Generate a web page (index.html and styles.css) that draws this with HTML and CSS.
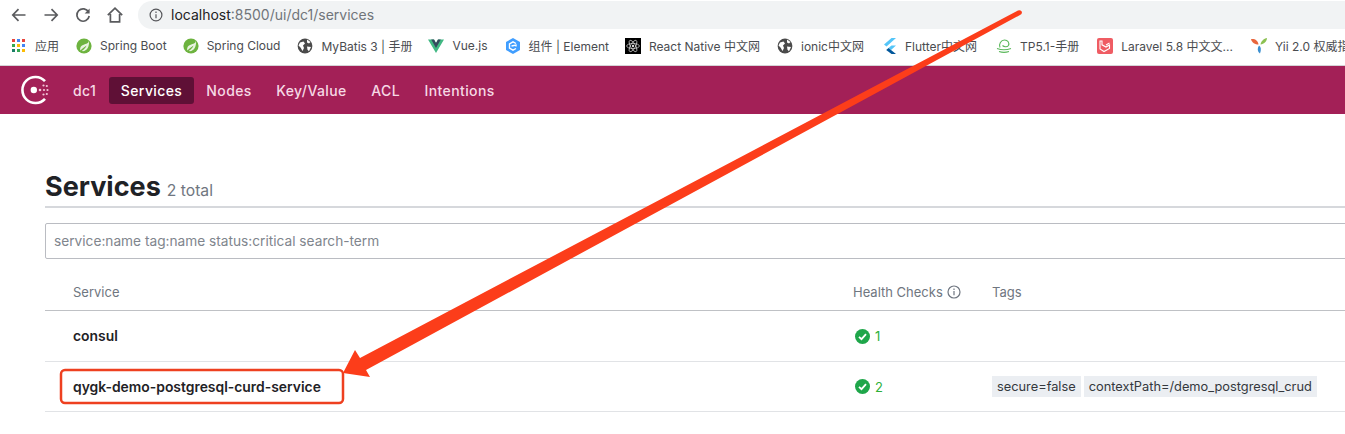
FILE: index.html
```html
<!DOCTYPE html>
<html lang="en">
<head>
  <meta charset="UTF-8">
  <title>Consul - Services</title>
  <link rel="stylesheet" href="styles.css">
</head>
<body>
<!-- browser chrome -->
<div class="toolbar">
  <svg class="tool" width="18" height="18" viewBox="0 0 18 18"><path d="M15.500 9H3M8.500 3.200 2.800 9l5.700 5.800"/></svg>
  <svg class="tool" width="18" height="18" viewBox="0 0 18 18"><path d="M2.500 9H15M9.500 3.200 15.200 9l-5.700 5.800"/></svg>
  <svg class="tool" width="18" height="18" viewBox="0 0 18 18"><path d="M14.600 6.200A6.200 6.200 0 1 0 15.200 10"/><path class="solid" d="M15.600 2.600v5h-5z"/></svg>
  <svg class="tool" width="18" height="18" viewBox="0 0 18 18"><path d="M1.800 9.200 9 2.200l7.200 7M4.400 8v7.800h9.200V8"/></svg>
  <div class="address">
    <svg class="info" width="14" height="14" viewBox="0 0 14 14"><circle cx="7" cy="7" r="5.900"/><path d="M7 6.200v4M7 3.600v1.400"/></svg>
    <span class="host">localhost</span><span class="path">:8500/ui/dc1/services</span>
  </div>
</div>

<div class="bookmarks">
  <div class="mark apps">
    <svg width="13" height="13" viewBox="0 0 13 13">
      <rect width="3" height="3" fill="#e8453c"/><rect x="5" width="3" height="3" fill="#4285f4"/><rect x="10" width="3" height="3" fill="#e8453c"/>
      <rect y="5" width="3" height="3" fill="#34a853"/><rect x="5" y="5" width="3" height="3" fill="#fbbc05"/><rect x="10" y="5" width="3" height="3" fill="#4285f4"/>
      <rect y="10" width="3" height="3" fill="#1a7f64"/><rect x="5" y="10" width="3" height="3" fill="#34a853"/><rect x="10" y="10" width="3" height="3" fill="#fbbc05"/>
    </svg>
    <span>应用</span>
  </div>
  <div class="mark">
    <svg width="16" height="16" viewBox="0 0 16 16"><circle cx="8" cy="8" r="7.600" fill="#6db33f"/><path d="M13 2.500C12.500 6.500 9 5.500 6 7.500c-1.800 1.200-2.300 3.500-1.600 5C7 9.500 9 9 10.500 7.500c-.5 2-2.300 3.800-4.800 5.500 4.300 1 8-3.500 7.300-10.500z" fill="#e8f3df"/></svg>
    <span>Spring Boot</span>
  </div>
  <div class="mark">
    <svg width="16" height="16" viewBox="0 0 16 16"><circle cx="8" cy="8" r="7.600" fill="#6db33f"/><path d="M13 2.500C12.500 6.500 9 5.500 6 7.500c-1.800 1.200-2.300 3.500-1.600 5C7 9.500 9 9 10.500 7.500c-.5 2-2.300 3.800-4.800 5.500 4.300 1 8-3.500 7.300-10.500z" fill="#e8f3df"/></svg>
    <span>Spring Cloud</span>
  </div>
  <div class="mark">
    <svg width="16" height="16" viewBox="0 0 16 16"><circle cx="8" cy="8" r="7.400" fill="#4a4a4a"/><path d="M3 4.500 6.500 3.500 8 5.500 6 7.500 7 10l-1.500 3L3.500 9.500 1.500 7.500zM10 1.500l3.500 2.500-1.500 1.500-2-1zM10 8.500l4 .5-2 4.200-1.500-1.500z" fill="#fff"/></svg>
    <span>MyBatis 3 | 手册</span>
  </div>
  <div class="mark">
    <svg width="16" height="16" viewBox="0 0 16 16"><path d="M0 1.500h6L8 5l2-3.500h6L8 15z" fill="#41b883"/><path d="M3.200 1.500H6L8 5l2-3.500h2.800L8 10z" fill="#35495e"/></svg>
    <span>Vue.js</span>
  </div>
  <div class="mark">
    <svg width="16" height="16" viewBox="0 0 16 16"><path d="M8 0 15 4v8l-7 4-7-4V4z" fill="#409eff"/><path d="M11 5.500 8 3.800 4.500 5.800v4.400L8 12.200l3-1.700M6.500 8 11 7v1.500" fill="none" stroke="#fff" stroke-width="1.400"/></svg>
    <span>组件 | Element</span>
  </div>
  <div class="mark">
    <svg width="16" height="16" viewBox="0 0 16 16"><rect width="16" height="16" fill="#000"/><g fill="none" stroke="#ddd" stroke-width=".7"><ellipse cx="8" cy="8" rx="6.400" ry="2.500"/><ellipse cx="8" cy="8" rx="6.400" ry="2.500" transform="rotate(60 8 8)"/><ellipse cx="8" cy="8" rx="6.400" ry="2.500" transform="rotate(120 8 8)"/></g><circle cx="8" cy="8" r="1.200" fill="#ddd"/></svg>
    <span>React Native 中文网</span>
  </div>
  <div class="mark">
    <svg width="16" height="16" viewBox="0 0 16 16"><circle cx="8" cy="8" r="7.400" fill="#4a4a4a"/><path d="M3 4.500 6.500 3.500 8 5.500 6 7.500 7 10l-1.500 3L3.500 9.500 1.500 7.500zM10 1.500l3.500 2.500-1.500 1.500-2-1zM10 8.500l4 .5-2 4.200-1.500-1.500z" fill="#fff"/></svg>
    <span>ionic中文网</span>
  </div>
  <div class="mark">
    <svg width="14" height="16" viewBox="0 0 14 16"><path d="M8.500 0h4.500L3.500 8.500 1 6.500z" fill="#54c5f8"/><path d="M8.500 7.500H13L8 12l-2.500-2z" fill="#54c5f8"/><path d="M5.500 10 8 12l5 4H8.500L3.200 12z" fill="#01579b"/></svg>
    <span>Flutter中文网</span>
  </div>
  <div class="mark">
    <svg width="16" height="16" viewBox="0 0 16 16"><g fill="none" stroke="#5cb85c" stroke-width="1.100"><path d="M4 9.500C2.500 6 5 2 8.500 2 12 2 13.500 5 12.500 7.500 11 9.500 8 9 6.500 7.500"/><path d="M1 10.500c4 1.500 10 1.500 14 0M3 13.500c3 1 7 1 10 0"/></g></svg>
    <span>TP5.1-手册</span>
  </div>
  <div class="mark">
    <svg width="16" height="16" viewBox="0 0 16 16"><rect width="16" height="16" rx="2" fill="#ef5c63"/><path d="M3 3v8l4 2.500 5.500-3V7L9 9 5 6.800V3zM9 7l3.500-2" fill="none" stroke="#fff" stroke-width="1.100"/></svg>
    <span>Laravel 5.8 中文文...</span>
  </div>
  <div class="mark">
    <svg width="16" height="16" viewBox="0 0 16 16"><path d="M0 1c4-.5 7 1.500 7.500 5.500C4 6.500 1 5 0 1z" fill="#e8663d"/><path d="M16 0c-3 .5-6 3-6.500 6.500C13 6 15.500 4 16 0z" fill="#8cc152"/><path d="M8 7.500c2 1.500 2.500 4 1 8-2.500-1.500-3-5-1-8z" fill="#3a8fd0"/></svg>
    <span>Yii 2.0 权威指南</span>
  </div>
</div>

<!-- consul ui -->
<nav class="nav">
  <svg class="logo" width="30" height="30" viewBox="0 0 30 30">
    <path class="logoRing" d="M25 6.200A13 13 0 1 0 25 23.800"/>
    <circle cx="13.800" cy="15" r="3.200" fill="#fff"/>
    <circle cx="20" cy="15" r="1.300" fill="#f3c6d8"/>
    <g fill="#f3c6d8"><circle cx="23.500" cy="10.500" r="1.100"/><circle cx="26.800" cy="11" r="1.100"/><circle cx="24" cy="15" r="1.100"/><circle cx="27.500" cy="15" r="1.100"/><circle cx="23.500" cy="19.500" r="1.100"/><circle cx="26.800" cy="19" r="1.100"/></g>
  </svg>
  <a class="navItem dc">dc1</a>
  <a class="navItem active">Services</a>
  <a class="navItem">Nodes</a>
  <a class="navItem">Key/Value</a>
  <a class="navItem">ACL</a>
  <a class="navItem">Intentions</a>
</nav>

<main class="content">
  <div class="heading">
    <h1>Services</h1>
    <span class="total">2 total</span>
  </div>
  <div class="search">service:name tag:name status:critical search-term</div>

  <div class="row head">
    <div>Service</div>
    <div class="healthHead">Health Checks
      <svg width="14" height="14" viewBox="0 0 14 14"><circle cx="7" cy="7" r="6"/><path d="M7 6v4.200M7 3.400v1.500"/></svg>
    </div>
    <div>Tags</div>
  </div>
  <div class="row item">
    <div class="name">consul</div>
    <div class="health">
      <svg width="15" height="15" viewBox="0 0 15 15"><circle cx="7.500" cy="7.500" r="7.500"/><path d="M4 7.800 6.500 10.200 11 5.200"/></svg>
      <span>1</span>
    </div>
    <div></div>
  </div>
  <div class="row item">
    <div class="name">qygk-demo-postgresql-curd-service</div>
    <div class="health">
      <svg width="15" height="15" viewBox="0 0 15 15"><circle cx="7.500" cy="7.500" r="7.500"/><path d="M4 7.800 6.500 10.200 11 5.200"/></svg>
      <span>2</span>
    </div>
    <div class="tags">
      <span class="tag">secure=false</span>
      <span class="tag">contextPath=/demo_postgresql_crud</span>
    </div>
  </div>
</main>

<!-- red annotation drawn on the screenshot -->
<svg class="annotation" width="1345" height="434" viewBox="0 0 1345 434">
  <rect x="61" y="370" width="282" height="33" rx="4" fill="none" stroke="#ee4020" stroke-width="2.500"/>
  <path d="M1018 10.500Q1021 9.500 1022 12Q1022 14.500 1020 15L366 370 370 377 343 373 355 350 360 358z" fill="#fc3d1a"/>
</svg>
</body>
</html>
```

FILE: styles.css
```css
* {
  box-sizing: border-box;
}
html, body {
  margin: 0;
  height: 434px;
  overflow: hidden;
  background: #fff;
  font-family: 'Inter', 'Noto Sans CJK SC', sans-serif;
}
.toolbar {
  display: flex;
  align-items: center;
  height: 29px;
  padding-left: 10px;
  gap: 14px;
  white-space: nowrap;
}
.tool {
  flex: none;
}
.tool path {
  fill: none;
  stroke: #5a5b5e;
  stroke-width: 1.700;
}
.tool path.solid {
  fill: #5a5b5e;
  stroke: none;
}
.address {
  display: flex;
  align-items: center;
  flex: 1;
  height: 28px;
  padding-left: 11px;
  border-radius: 14px 0 0 14px;
  background: #f1f3f4;
  font-size: 14px;
}
.info {
  margin-right: 8px;
}
.info circle, .info path {
  fill: none;
  stroke: #55565a;
  stroke-width: 1.200;
}
.host {
  color: #222;
}
.path {
  color: #70757a;
}
.bookmarks {
  display: flex;
  align-items: center;
  gap: 17px;
  height: 37px;
  padding: 0 0 3px 12px;
  border-bottom: 1px solid #d4d4d6;
  white-space: nowrap;
  font-size: 12px;
  color: #4a4c50;
  overflow: hidden;
}
.mark {
  display: flex;
  align-items: center;
  flex: none;
  gap: 8px;
}
.apps {
  gap: 10px;
}
/* nudges so the items land where the real bar puts them */
.mark:nth-child(3), .mark:nth-child(5), .mark:nth-child(7) {
  margin-left: -1px;
}
.mark:nth-child(9), .mark:nth-child(10) {
  margin-left: 2px;
}
.mark:nth-child(11), .mark:nth-child(12) {
  margin-left: 1px;
}
.nav {
  display: flex;
  align-items: center;
  gap: 8.500px;
  height: 48px;
  padding-left: 20px;
  background: #a32057;
}
.logo {
  margin-right: 14.500px;
}
.logoRing {
  fill: none;
  stroke: #fff;
  stroke-width: 2.600;
}
.navItem {
  padding: 0 8px;
  height: 27px;
  line-height: 27px;
  border-radius: 3px;
  font-size: 14px;
  font-weight: 500;
  letter-spacing: .4px;
  color: #f6d9e5;
}
.dc {
  padding: 0;
  margin-right: 4px;
}
.active {
  padding: 0 12px;
  margin-right: -4.500px;
  background: #5f1036;
  color: #fff;
}
.content {
  padding: 56px 0 0 45px;
  margin-right: -10px;
}
.heading {
  display: flex;
  align-items: baseline;
  gap: 6px;
  height: 38px;
  border-bottom: 2px solid #d6d8dc;
}
h1 {
  margin: 0;
  font-size: 27px;
  line-height: 34px;
  font-weight: 700;
  color: #1f2226;
}
.total {
  font-size: 15.700px;
  color: #6f7680;
}
.search {
  height: 36px;
  margin-top: 15px;
  padding-left: 8px;
  line-height: 34px;
  border: 1px solid #babcc2;
  border-radius: 2px 0 0 2px;
  font-size: 13.700px;
  color: #80858d;
}
.row {
  display: grid;
  grid-template-columns: 780px 139px 1fr;
  align-items: center;
  padding-left: 28px;
  border-bottom: 1px solid #e1e3e6;
}
.head {
  height: 52px;
  padding-top: 15px;
  border-bottom: 1px solid #bfc1c5;
  font-size: 13px;
  color: #6f7680;
}
.healthHead {
  display: flex;
  align-items: center;
  gap: 4px;
}
.healthHead svg circle, .healthHead svg path {
  fill: none;
  stroke: #6f7680;
  stroke-width: 1.200;
}
.item {
  height: 50.500px;
  padding-top: 1px;
}
.name {
  font-size: 13.900px;
  font-weight: 600;
  color: #1f2226;
}
.health {
  display: flex;
  align-items: center;
  gap: 5px;
  font-size: 13px;
  color: #2eb039;
}
.health svg {
  margin-left: 2px;
}
.health circle {
  fill: #1fa64a;
}
.health path {
  fill: none;
  stroke: #fff;
  stroke-width: 1.800;
}
.tags {
  display: flex;
  gap: 3px;
}
.tag {
  padding: 0 5px;
  height: 21px;
  line-height: 21px;
  background: #ebeef2;
  font-size: 12.800px;
  color: #34383d;
}
.annotation {
  position: absolute;
  top: 0;
  left: 0;
}
```
